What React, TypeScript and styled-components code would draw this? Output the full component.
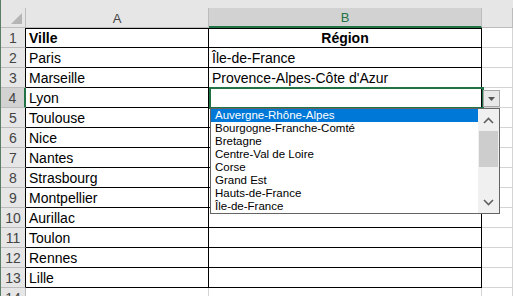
import React from "react";
import styled, { createGlobalStyle } from "styled-components";

const Global = createGlobalStyle`
  html, body { margin: 0; padding: 0; background: #ffffff; }
  body { font-family: "Liberation Sans", Arial, sans-serif; overflow: hidden; }
`;

const GREEN = "#217346";
const GRID = "#d4d4d4";
const HEAD_BG = "#e6e6e6";
const HEAD_SEL = "#d2d2d2";

const Sheet = styled.div`
  position: relative;
  width: 513px;
  height: 296px;
  background: ${HEAD_BG};
  border-left: 1px solid #5b7f66;
  box-sizing: border-box;
  padding-top: 8px;
  overflow: hidden;
`;

const Grid = styled.div`
  display: grid;
  grid-template-columns: 25px 183px 273px 1fr;
  grid-auto-rows: 20px;
  background: #ffffff;
`;

const Corner = styled.div`
  position: relative;
  background: ${HEAD_BG};
  border-right: 1px solid #bcbcbc;
  border-bottom: 1px solid #bcbcbc;
  box-sizing: border-box;
  &::after {
    content: "";
    position: absolute;
    right: 3px;
    bottom: 3px;
    width: 0;
    height: 0;
    border-left: 11px solid transparent;
    border-bottom: 11px solid #b5b5b5;
  }
`;

const ColHead = styled.div<{ $sel?: boolean }>`
  background: ${(p) => (p.$sel ? HEAD_SEL : HEAD_BG)};
  border-right: 1px solid #bcbcbc;
  border-bottom: ${(p) => (p.$sel ? `2px solid ${GREEN}` : "1px solid #bcbcbc")};
  box-sizing: border-box;
  display: flex;
  align-items: center;
  justify-content: center;
  font-size: 13px;
  color: ${(p) => (p.$sel ? "#217346" : "#444444")};
  padding-top: 1px;
`;

const RowHead = styled.div<{ $sel?: boolean; $edge?: string }>`
  background: ${(p) => (p.$sel ? HEAD_SEL : HEAD_BG)};
  border-right: ${(p) => (p.$sel ? `2px solid ${GREEN}` : `1px solid ${p.$edge || "#bcbcbc"}`)};
  border-bottom: 1px solid #bcbcbc;
  box-sizing: border-box;
  display: flex;
  align-items: center;
  justify-content: center;
  font-size: 14px;
  color: #444444;
`;

const Cell = styled.div<{ $boxed?: boolean; $bold?: boolean; $center?: boolean; $top?: boolean }>`
  border-right: 1px solid ${(p) => (p.$boxed ? "#000000" : GRID)};
  border-bottom: 1px solid ${(p) => (p.$boxed ? "#000000" : GRID)};
  border-top: ${(p) => (p.$top ? "1px solid #000000" : "none")};
  box-sizing: border-box;
  display: flex;
  align-items: center;
  justify-content: ${(p) => (p.$center ? "center" : "flex-start")};
  padding: 0 3px;
  font-size: 14px;
  font-weight: ${(p) => (p.$bold ? 700 : 400)};
  color: #000000;
  white-space: nowrap;
  overflow: visible;
`;

const ActiveFrame = styled.div`
  position: absolute;
  left: 208px;
  top: 87px;
  width: 275px;
  height: 22px;
  border: 2px solid ${GREEN};
  box-sizing: border-box;
  pointer-events: none;
`;

const DropButton = styled.div`
  position: absolute;
  left: 482px;
  top: 90px;
  width: 17px;
  height: 17px;
  background: #e8e8e8;
  border: 1px solid #a6a6a6;
  box-sizing: border-box;
  display: flex;
  align-items: center;
  justify-content: center;
`;

const List = styled.div`
  position: absolute;
  left: 209px;
  top: 108px;
  width: 290px;
  height: 106px;
  background: #ffffff;
  border: 1px solid #646464;
  box-sizing: border-box;
  display: flex;
`;

const Items = styled.div`
  flex: 1;
  display: flex;
  flex-direction: column;
`;

const Item = styled.div<{ $sel?: boolean }>`
  height: 13px;
  line-height: 13px;
  padding-left: 4px;
  font-size: 11.5px;
  color: ${(p) => (p.$sel ? "#ffffff" : "#000000")};
  background: ${(p) => (p.$sel ? "#0078d7" : "transparent")};
  white-space: nowrap;
`;

const Scroll = styled.div`
  width: 21px;
  background: #f0f0f0;
  display: flex;
  flex-direction: column;
`;

const Arrow = styled.div`
  height: 22px;
  display: flex;
  align-items: center;
  justify-content: center;
`;

const Track = styled.div`
  flex: 1;
  display: flex;
  flex-direction: column;
`;

const Thumb = styled.div`
  height: 36px;
  margin: 0 1px;
  background: #cdcdcd;
`;

const cities = [
  "Paris",
  "Marseille",
  "Lyon",
  "Toulouse",
  "Nice",
  "Nantes",
  "Strasbourg",
  "Montpellier",
  "Aurillac",
  "Toulon",
  "Rennes",
  "Lille",
];

const regions: Record<number, string> = {
  2: "Île-de-France",
  3: "Provence-Alpes-Côte d'Azur",
};

const options = [
  "Auvergne-Rhône-Alpes",
  "Bourgogne-Franche-Comté",
  "Bretagne",
  "Centre-Val de Loire",
  "Corse",
  "Grand Est",
  "Hauts-de-France",
  "Île-de-France",
];

const Chevron = ({ up }: { up?: boolean }) => (
  <svg width="11" height="7" viewBox="0 0 11 7">
    <path
      d={up ? "M1 6 L5.5 1.5 L10 6" : "M1 1 L5.5 5.5 L10 1"}
      fill="none"
      stroke="#606060"
      strokeWidth="1.6"
    />
  </svg>
);

export default function App() {
  const rows: React.ReactNode[] = [];
  rows.push(
    <React.Fragment key="r1">
      <RowHead $edge="#000000">1</RowHead>
      <Cell $boxed $bold $top>Ville</Cell>
      <Cell $boxed $bold $center $top>Région</Cell>
      <Cell />
    </React.Fragment>
  );
  cities.forEach((c, i) => {
    const n = i + 2;
    rows.push(
      <React.Fragment key={n}>
        <RowHead $sel={n === 4} $edge="#000000">{n}</RowHead>
        <Cell $boxed>{c}</Cell>
        <Cell $boxed>{regions[n] || ""}</Cell>
        <Cell />
      </React.Fragment>
    );
  });
  rows.push(
    <React.Fragment key="r14">
      <RowHead>14</RowHead>
      <Cell />
      <Cell />
      <Cell />
    </React.Fragment>
  );

  return (
    <>
      <Global />
      <Sheet>
        <Grid>
          <Corner />
          <ColHead>A</ColHead>
          <ColHead $sel>B</ColHead>
          <ColHead />
          {rows}
        </Grid>
        <ActiveFrame />
        <DropButton>
          <svg width="7" height="4" viewBox="0 0 7 4">
            <path d="M0 0 H7 L3.5 4 Z" fill="#555555" />
          </svg>
        </DropButton>
        <List>
          <Items>
            {options.map((o, i) => (
              <Item key={o} $sel={i === 0}>
                {o}
              </Item>
            ))}
          </Items>
          <Scroll>
            <Arrow>
              <Chevron up />
            </Arrow>
            <Track>
              <Thumb />
            </Track>
            <Arrow>
              <Chevron />
            </Arrow>
          </Scroll>
        </List>
      </Sheet>
    </>
  );
}
